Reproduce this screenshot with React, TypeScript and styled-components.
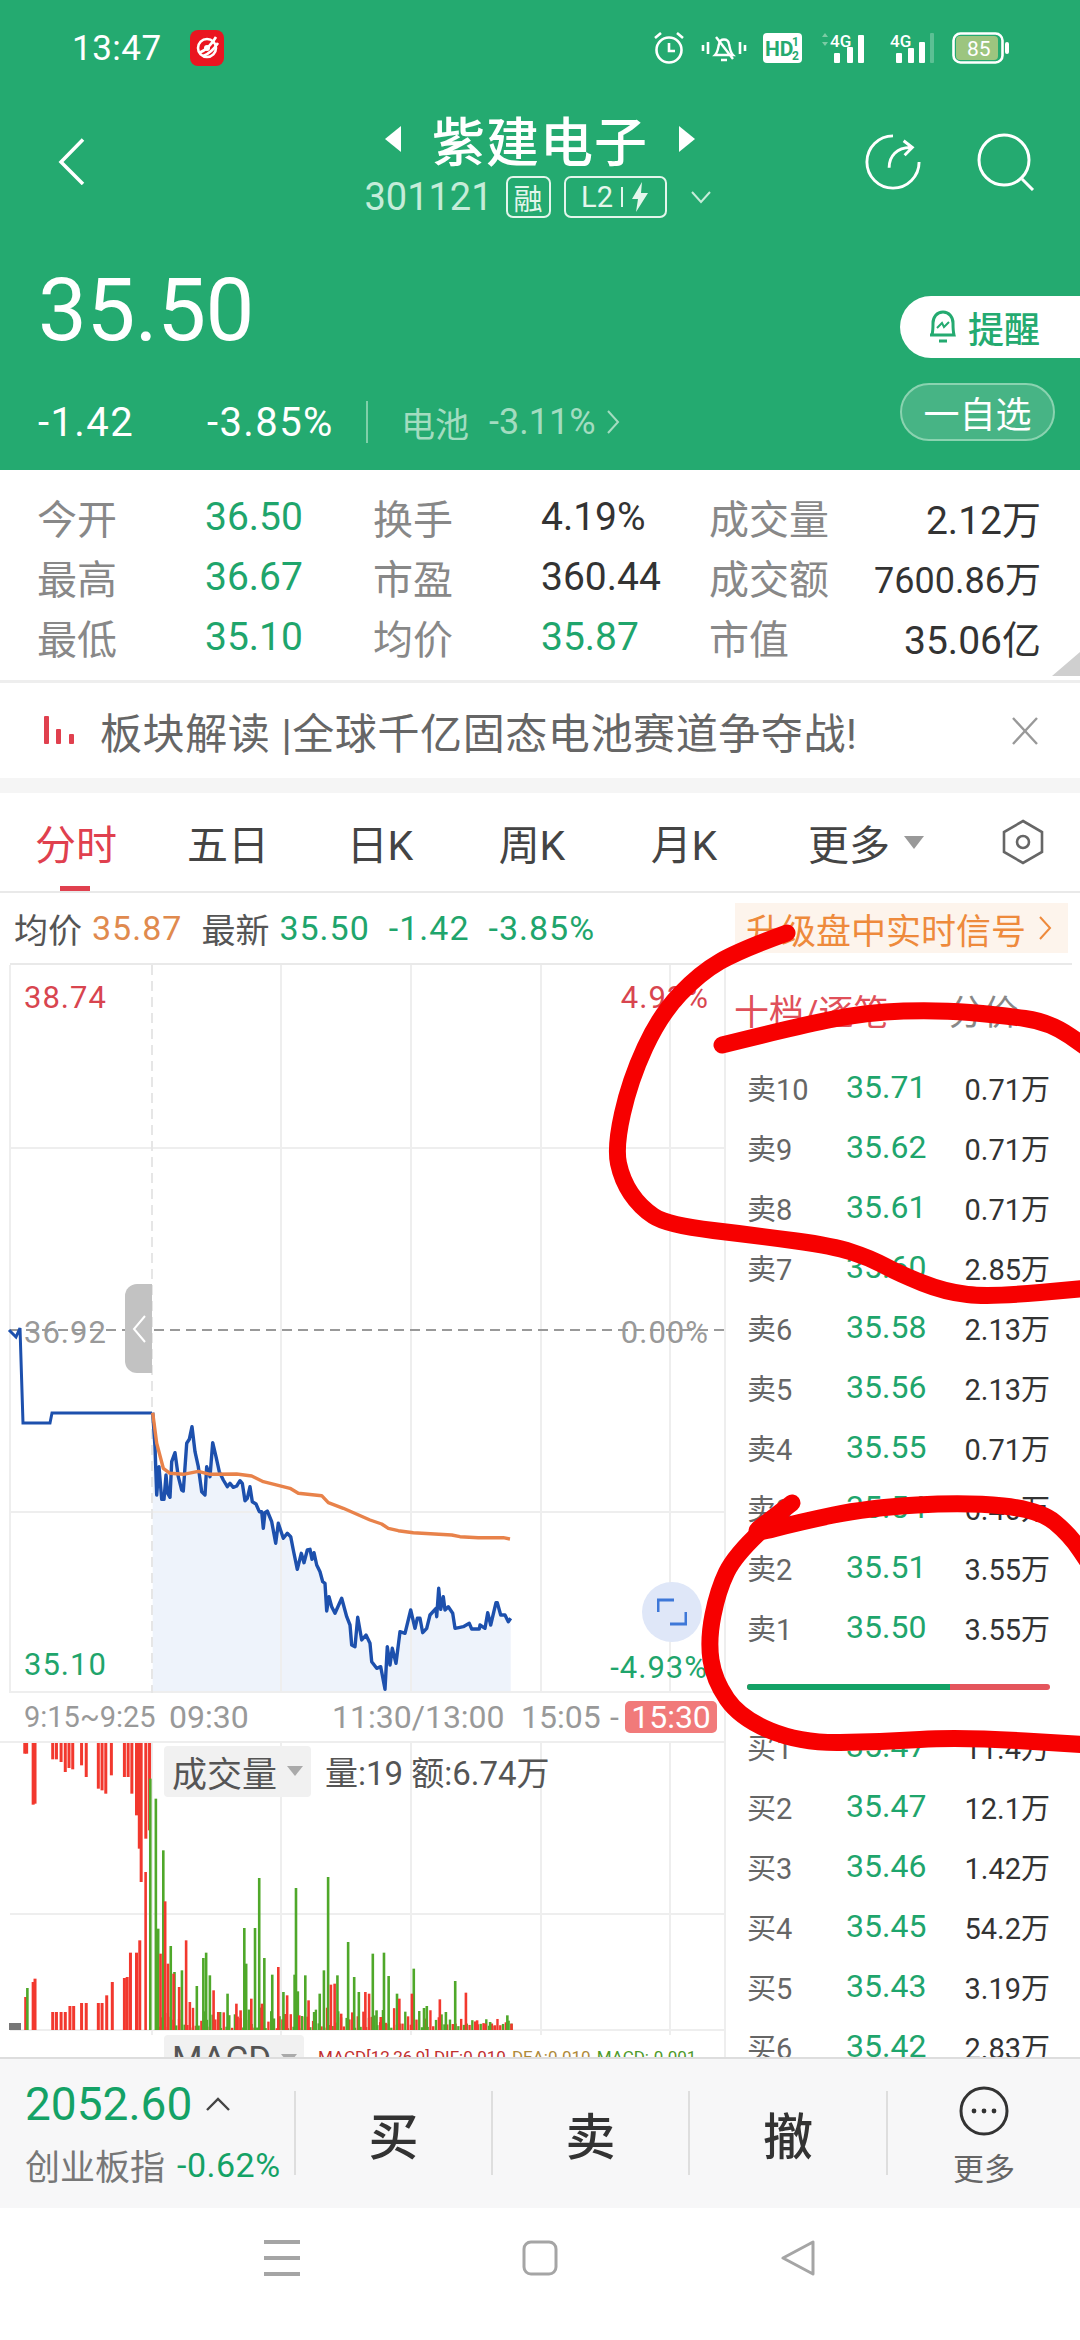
import React from 'react'
import styled, { createGlobalStyle } from 'styled-components'

const GREEN = '#24aa70'
const PRICE_GREEN = '#1fa56c'
const FONT = 'Roboto, "Noto Sans CJK SC", sans-serif'

const GlobalStyle = createGlobalStyle`
  html, body {
    margin: 0;
    padding: 0;
    background: #fff;
    font-family: ${FONT};
  }
  * { box-sizing: border-box; }
`

const Page = styled.div`
  position: relative;
  width: 1080px;
  height: 2340px;
  overflow: hidden;
  display: flex;
  flex-direction: column;
  background: #fff;
`

/* header */
const Header = styled.header`
  height: 470px;
  flex: none;
  background: ${GREEN};
  color: #fff;
`

const StatusBar = styled.div`
  height: 96px;
  display: flex;
  align-items: center;
  padding: 0 70px 0 72px;
`

const StatusTime = styled.span`
  font-size: 35px;
  width: 118px;
  letter-spacing: 0.5px;
`

const StatusIcons = styled.div`
  margin-left: auto;
  display: flex;
  align-items: center;
  gap: 16px;
`

const NavRow = styled.div`
  display: grid;
  grid-template-columns: 1fr auto 1fr;
  height: 126px;
  padding-top: 10px;
`

const BackSlot = styled.div`
  padding: 32px 0 0 58px;
`

const TitleBlock = styled.div`
  display: flex;
  flex-direction: column;
  align-items: center;
`

const TitleLine = styled.div`
  display: flex;
  align-items: center;
  gap: 30px;
  height: 66px;
  font-size: 53px;
  font-weight: 500;
  letter-spacing: 1px;
`

const SubLine = styled.div`
  display: flex;
  align-items: center;
  height: 50px;
  gap: 13px;
  padding-right: 4px;
`

const StockCode = styled.span`
  font-size: 38px;
  color: #c5ecd9;
`

const OutlineBadge = styled.span<{ $w: number }>`
  width: ${(p) => p.$w}px;
  height: 42px;
  border: 2px solid #e4f6ec;
  border-radius: 7px;
  display: inline-flex;
  align-items: center;
  justify-content: center;
  gap: 8px;
  font-size: 29px;
  color: #e4f6ec;
`

const BadgeDivider = styled.i`
  width: 2px;
  height: 20px;
  background: #e4f6ec;
`

const SubChevron = styled.svg`
  margin-left: 10px;
`

const NavActions = styled.div`
  display: flex;
  justify-content: flex-end;
  gap: 55px;
  padding: 27px 45px 0 0;
`

const QuoteRow = styled.div`
  display: flex;
  justify-content: space-between;
`

const QuoteLeft = styled.div`
  padding: 50px 0 0 38px;
`

const BigPrice = styled.div`
  font-size: 87px;
  line-height: 76px;
  height: 76px;
  letter-spacing: -0.5px;
`

const ChangeRow = styled.div`
  display: flex;
  align-items: center;
  height: 44px;
  margin-top: 52px;
  font-size: 40px;
  letter-spacing: 1.4px;
`

const ChangeValue = styled.span`
  width: 169px;
`

const ChangePct = styled.span`
  width: 159px;
`

const ChangeDivider = styled.i`
  width: 2px;
  height: 42px;
  background: #7fd0a9;
  margin-right: 33px;
`

const SectorText = styled.span`
  color: #a3dcc0;
  font-size: 34px;
  letter-spacing: 0;
  display: flex;
  align-items: center;
  gap: 20px;
`

const SectorPct = styled.span`
  display: flex;
  align-items: center;
  gap: 10px;
  font-size: 36px;
`

const QuoteRight = styled.div`
  width: 180px;
  padding-top: 74px;
  display: flex;
  flex-direction: column;
  gap: 25px;
`

const RemindButton = styled.div`
  height: 62px;
  background: #fff;
  border-radius: 31px 0 0 31px;
  color: ${GREEN};
  font-size: 36px;
  font-weight: 500;
  display: flex;
  align-items: center;
  gap: 10px;
  padding-left: 28px;
`

const WatchButton = styled.div`
  width: 155px;
  height: 58px;
  border: 2px solid #8ad3b0;
  border-radius: 29px;
  background: #47b485;
  font-size: 36px;
  display: flex;
  align-items: center;
  justify-content: center;
`

/* stat grid */
const StatsPanel = styled.section`
  position: relative;
  flex: none;
  height: 213px;
  padding: 17px 39px 0 37px;
  border-bottom: 3px solid #eeeeee;
  display: grid;
  grid-template-columns: 168px 168px 168px 168px 120px 1fr;
  grid-auto-rows: 60px;
  align-items: center;
`

const StatLabel = styled.span`
  font-size: 40px;
  color: #888;
`

const StatValue = styled.span<{ $green?: boolean; $right?: boolean; $small?: boolean }>`
  font-size: ${(p) => (p.$small ? 36 : 39)}px;
  color: ${(p) => (p.$green ? PRICE_GREEN : '#333')};
  text-align: ${(p) => (p.$right ? 'right' : 'left')};
  white-space: nowrap;
`

const CornerMark = styled.i`
  position: absolute;
  right: 0;
  bottom: 4px;
  width: 28px;
  height: 24px;
  background: #cfcfcf;
  clip-path: polygon(100% 0, 100% 100%, 0 100%);
`

/* banner */
const Banner = styled.section`
  flex: none;
  height: 95px;
  display: flex;
  align-items: center;
  padding: 0 42px 0 44px;
  gap: 24px;
  font-size: 42px;
  letter-spacing: 0.6px;
  color: #666;
`

const BannerText = styled.span`
  flex: 1;
  white-space: nowrap;
`

const GrayBand = styled.div`
  flex: none;
  height: 15px;
  background: #f5f5f5;
`

/* tabs */
const TabBar = styled.nav`
  flex: none;
  height: 100px;
  display: flex;
  align-items: center;
  border-bottom: 2px solid #e9e9e9;
  padding-right: 36px;
`

const Tab = styled.div<{ $active?: boolean; $wide?: boolean }>`
  position: relative;
  width: ${(p) => (p.$wide ? 212 : 152)}px;
  height: 100%;
  display: flex;
  align-items: center;
  justify-content: center;
  gap: 14px;
  font-size: 41px;
  color: ${(p) => (p.$active ? '#e0404e' : '#444')};
  ${(p) =>
    p.$active &&
    `&::after {
      content: '';
      position: absolute;
      left: 60px;
      bottom: 0;
      width: 30px;
      height: 5px;
      background: #e0404e;
    }`}
`

const TabCaret = styled.i`
  width: 0;
  height: 0;
  border-left: 10px solid transparent;
  border-right: 10px solid transparent;
  border-top: 13px solid #999;
`

const TabIconSlot = styled.div`
  margin-left: auto;
  display: flex;
`

/* info line */
const InfoRow = styled.div`
  flex: none;
  height: 72px;
  margin: 0 8px 0 10px;
  border-bottom: 2px solid #e9e9e9;
  display: flex;
  align-items: center;
  font-size: 34px;
  padding-left: 4px;
  white-space: nowrap;
`

const InfoLabel = styled.span`
  color: #555;
  margin-right: 10px;
`

const InfoNumber = styled.span<{ $color: string }>`
  color: ${(p) => p.$color};
  margin-right: 19px;
  letter-spacing: 1px;
`

const SignalChip = styled.div`
  margin-left: auto;
  height: 50px;
  width: 333px;
  margin-right: 4px;
  background: #fdf4ec;
  color: #ee8a3c;
  font-size: 35px;
  display: flex;
  align-items: center;
  gap: 12px;
  padding-left: 11px;
`

/* body */
const Body = styled.div`
  flex: none;
  height: 1092px;
  display: flex;
  overflow: hidden;
`

const ChartColumn = styled.div`
  width: 726px;
  flex: none;
  border-right: 2px solid #eeeeee;
`

const MainChart = styled.div`
  position: relative;
  height: 728px;
`

const ChartLabel = styled.span<{ $color: string; $x: number; $y: number; $alignRight?: boolean }>`
  position: absolute;
  top: ${(p) => p.$y}px;
  ${(p) => (p.$alignRight ? `right: ${726 - p.$x}px;` : `left: ${p.$x}px;`)}
  transform: translateY(-50%);
  font-size: 31px;
  letter-spacing: 1px;
  color: ${(p) => p.$color};
`

const SideHandle = styled.div`
  position: absolute;
  left: 125px;
  top: 319px;
  width: 27px;
  height: 89px;
  background: #c2c2c2;
  border-radius: 12px 0 0 12px;
  display: flex;
  align-items: center;
  justify-content: center;
`

const ExpandButton = styled.div`
  position: absolute;
  left: 642px;
  top: 617px;
  width: 60px;
  height: 60px;
  border-radius: 50%;
  background: #dfe7f8;
  display: flex;
  align-items: center;
  justify-content: center;
`

const TimeAxis = styled.div`
  height: 48px;
  display: grid;
  grid-template-columns: 145px 163px 189px 89px 15px 92px;
  align-items: center;
  font-size: 32px;
  color: #999;
  white-space: nowrap;
  padding-left: 24px;
`

const PreMarketTick = styled.span`
  font-size: 29px;
`

const TimeBadge = styled.span`
  height: 32px;
  border-radius: 5px;
  background: #f17a7a;
  color: #fff;
  display: flex;
  align-items: center;
  justify-content: center;
`

const VolumeChart = styled.div`
  position: relative;
  height: 294px;
  border-top: 2px solid #eeeeee;
`

const ChartChip = styled.div`
  background: #f1f1f1;
  border-radius: 4px;
  color: #555;
  font-size: 35px;
  display: flex;
  align-items: center;
  gap: 10px;
  padding: 0 8px;
`

const VolumeLegend = styled.div`
  position: absolute;
  left: 164px;
  top: 4px;
  display: flex;
  align-items: center;
  gap: 14px;
  font-size: 33px;
  color: #555;
  height: 48px;
`

const ChipCaret = styled.i`
  width: 0;
  height: 0;
  border-left: 8px solid transparent;
  border-right: 8px solid transparent;
  border-top: 10px solid #aaa;
`

const MacdRow = styled.div`
  display: flex;
  align-items: flex-start;
  height: 24px;
  padding-left: 164px;
  white-space: nowrap;
  font-size: 17px;
  overflow: hidden;
`

const MacdChip = styled(ChartChip)`
  height: 48px;
  width: 140px;
  margin-right: 14px;
`

const MacdText = styled.span<{ $color: string }>`
  color: ${(p) => p.$color};
  margin-right: 6px;
  line-height: 44px;
`

/* order book */
const DepthColumn = styled.div`
  flex: 1;
`

const DepthTabs = styled.div`
  height: 92px;
  padding: 0 0 22px 8px;
  display: flex;
  align-items: flex-end;
  font-size: 35px;
  color: #888;
  gap: 60px;
`

const DepthTabActive = styled.span`
  color: #e0505a;
`

const DepthRow = styled.div`
  height: 60px;
  display: grid;
  grid-template-columns: 99px 1fr auto;
  align-items: center;
  padding: 0 30px 0 21px;
`

const DepthLabel = styled.span`
  font-size: 29px;
  color: #666;
`

const DepthPrice = styled.span`
  font-size: 32px;
  color: ${PRICE_GREEN};
`

const DepthVolume = styled.span`
  font-size: 29px;
  color: #333;
`

const SpreadSlot = styled.div`
  height: 59px;
  display: flex;
  align-items: center;
  padding: 0 30px 0 21px;
`

const SpreadBar = styled.div`
  flex: 1;
  height: 6px;
  border-radius: 3px;
  overflow: hidden;
  display: flex;
  background: #e4555c;
`

const SpreadBuy = styled.div<{ $pct: number }>`
  width: ${(p) => p.$pct}%;
  background: #14a266;
`

/* bottom bar */
const TradeBar = styled.footer`
  flex: none;
  height: 151px;
  background: #f7f7f8;
  border-top: 2px solid #dddddd;
  display: grid;
  grid-template-columns: 294px 197px 197px 198px 1fr;
  padding-top: 32px;
`

const IndexCell = styled.div`
  padding-left: 25px;
`

const IndexValue = styled.div`
  display: flex;
  align-items: center;
  gap: 14px;
  height: 46px;
  margin-top: -10px;
  font-size: 46px;
  color: #14a266;
`

const IndexMeta = styled.div`
  display: flex;
  align-items: center;
  margin-top: 12px;
  gap: 12px;
  font-size: 35px;
  color: #777;
  white-space: nowrap;
`

const IndexPct = styled.span`
  color: #14a266;
  font-size: 34px;
  letter-spacing: 0.5px;
`

const TradeCell = styled.div`
  height: 84px;
  border-left: 2px solid #dedede;
  display: flex;
  align-items: center;
  justify-content: center;
  font-size: 50px;
  font-weight: 500;
  color: #333;
`

const MoreCell = styled.div`
  height: 84px;
  border-left: 2px solid #dedede;
  display: flex;
  flex-direction: column;
  align-items: center;
  gap: 8px;
  font-size: 31px;
  color: #666;
  svg {
    flex: none;
    margin-top: -5px;
  }
`

const SystemNav = styled.div`
  flex: 1;
  display: flex;
  align-items: center;
  justify-content: center;
  gap: 222px;
  padding-bottom: 32px;
`

const Annotation = styled.svg`
  position: absolute;
  left: 0;
  top: 0;
  pointer-events: none;
`

const stats: [string, string, boolean, string, string, boolean, string, string][] = [
  ['今开', '36.50', true, '换手', '4.19%', false, '成交量', '2.12万'],
  ['最高', '36.67', true, '市盈', '360.44', false, '成交额', '7600.86万'],
  ['最低', '35.10', true, '均价', '35.87', true, '市值', '35.06亿'],
]

const asks: [string, string, string][] = [
  ['卖10', '35.71', '0.71万'],
  ['卖9', '35.62', '0.71万'],
  ['卖8', '35.61', '0.71万'],
  ['卖7', '35.60', '2.85万'],
  ['卖6', '35.58', '2.13万'],
  ['卖5', '35.56', '2.13万'],
  ['卖4', '35.55', '0.71万'],
  ['卖3', '35.54', '6.40万'],
  ['卖2', '35.51', '3.55万'],
  ['卖1', '35.50', '3.55万'],
]

const bids: [string, string, string][] = [
  ['买1', '35.47', '11.4万'],
  ['买2', '35.47', '12.1万'],
  ['买3', '35.46', '1.42万'],
  ['买4', '35.45', '54.2万'],
  ['买5', '35.43', '3.19万'],
  ['买6', '35.42', '2.83万'],
]

// price line, read off the screenshot at 3x, origin (130,1380)
const priceRaw = [
  68,98,75,200,80,345,87,260,95,358,102,358,108,285,113,340,120,352,125,245,135,218,145,290,155,330,160,333,170,190,178,178,186,140,195,215,205,260,215,335,225,345,230,260,240,290,248,188,258,230,268,275,280,300,292,320,300,310,310,322,320,318,330,302,337,310,345,362,352,355,360,320,367,365,378,372,388,395,395,395,400,445,405,398,412,393,425,425,437,490,445,430,460,475,472,460,482,470,490,510,502,568,514,520,522,548,532,510,540,508,546,538,552,518,560,555,570,575,578,605,585,610,590,693,597,650,605,680,615,700,635,655,650,710,660,735,665,795,675,800,683,712,695,780,708,765,720,790,725,845,740,865,752,860,765,928,772,800,780,855,787,805,798,850,810,755,825,760,842,690,855,745,862,715,870,715,878,758,890,745,900,705,918,685,920,710,926,625,932,688,940,650,945,690,955,680,968,700,975,745,990,742,1000,740,1018,730,1025,747,1048,747,1050,735,1065,745,1073,698,1082,735,1098,668,1102,668,1112,705,1125,705,1135,725,1142,715,
]

const avgRaw = [
  68,98,80,190,100,265,120,280,160,283,205,274,240,283,320,282,365,288,400,305,480,325,505,340,575,347,595,368,640,385,720,420,755,432,775,445,805,452,850,458,965,465,990,470,1045,473,1120,473,1140,477,
]

const toChartPoints = (raw: number[]) => {
  const out: string[] = []
  for (let i = 0; i < raw.length; i += 2) {
    out.push(`${(130 + raw[i] / 3).toFixed(1)},${(415 + raw[i + 1] / 3).toFixed(1)}`)
  }
  return out
}

const pricePoints = toChartPoints(priceRaw)
const avgPoints = toChartPoints(avgRaw)
const preMarket = '9,365 16,372 20,363 23,458 50,458 52,448 152,448'
const areaPoints = `152.7,728 ${pricePoints.join(' ')} 510.7,728`

// volume bars, x and top y in zoomed units (x 2.148, y 3)
const hanging = [
  [50, 215], [54, 215], [68, 368], [72, 365], [110, 232], [118, 232], [128, 240], [137, 270], [145, 258], [153, 262],
  [172, 250], [182, 285], [208, 320], [216, 325], [224, 335], [236, 280], [264, 285], [272, 285], [280, 335], [290, 400],
  [296, 500], [300, 600], [310, 470], [318, 445],
]
const preBars = [
  [52, 945], [68, 900], [72, 890], [110, 990], [118, 990], [128, 990], [137, 990], [147, 972], [155, 972], [172, 963],
  [182, 963], [208, 963], [216, 963], [226, 940], [238, 900], [264, 888], [270, 885], [277, 812], [290, 812], [297, 775],
]
const greenBars = [
  [56, 918], [320, 290], [332, 350], [337, 740], [348, 505], [364, 792], [372, 870], [388, 865], [420, 912], [434, 828],
  [440, 812], [448, 880], [470, 990], [486, 935], [522, 738], [526, 845], [545, 738], [554, 588], [565, 828], [582, 878],
  [606, 930], [630, 878], [633, 618], [637, 928], [653, 880], [672, 990], [684, 935], [693, 865], [702, 585], [722, 880],
  [745, 780], [758, 885], [768, 930], [798, 815], [806, 985], [822, 812], [832, 882], [850, 935], [886, 860], [908, 978],
  [914, 972], [955, 990], [975, 897], [1050, 1020], [1087, 1000],
]
const redBars = [
  [310, 570], [342, 815], [352, 658], [358, 845], [370, 875], [382, 915], [397, 775], [405, 960], [456, 925], [466, 990],
  [505, 965], [514, 985], [537, 950], [560, 965], [595, 855], [614, 940], [640, 1000], [660, 955], [708, 908], [716, 905],
  [730, 995], [782, 930], [790, 935], [815, 1005], [855, 950], [882, 935], [942, 952], [998, 932], [1022, 1015], [1040, 1025],
  [1060, 1030], [1096, 1025],
]

const volX = (x: number) => x / 2.148
const volY = (y: number) => y / 3 - 61
const VOL_BASE = 287

const filler: { x: number; top: number; red: boolean }[] = []
for (let x = 340; x < 1100; x += 6) {
  const wave = Math.abs(Math.sin(x * 0.37) + Math.sin(x * 0.11)) * 24
  const fade = x > 950 ? 12 : 6
  filler.push({ x, top: 1045 - fade - wave * (x > 950 ? 0.5 : 1.3), red: Math.sin(x * 1.7) > 0 })
}

const smooth = (pts: number[][]) => {
  let d = `M${pts[0][0]} ${pts[0][1]}`
  for (let i = 1; i < pts.length - 1; i++) {
    const mx = (pts[i][0] + pts[i + 1][0]) / 2
    const my = (pts[i][1] + pts[i + 1][1]) / 2
    d += ` Q${pts[i][0]} ${pts[i][1]} ${mx} ${my}`
  }
  const last = pts[pts.length - 1]
  return `${d} L${last[0]} ${last[1]}`
}

const strokes = [
  smooth([[787, 933], [740, 950], [700, 973], [660, 1015], [630, 1080], [615, 1147], [622, 1180], [640, 1207], [667, 1225], [760, 1236], [833, 1246], [870, 1258], [900, 1274], [945, 1292], [990, 1297], [1090, 1288]]),
  smooth([[722, 1045], [790, 1028], [867, 1012], [940, 1010], [1000, 1015], [1050, 1022], [1090, 1050]]),
  smooth([[792, 1503], [770, 1520], [750, 1535], [800, 1522], [867, 1508], [967, 1502], [1040, 1510], [1070, 1535], [1090, 1565]]),
  smooth([[762, 1530], [735, 1555], [718, 1590], [708, 1640], [714, 1680], [740, 1718], [800, 1743], [880, 1742], [960, 1737], [1090, 1745]]),
]

const DepthLine = ({ row }: { row: [string, string, string] }) => (
  <DepthRow>
    <DepthLabel>{row[0]}</DepthLabel>
    <DepthPrice>{row[1]}</DepthPrice>
    <DepthVolume>{row[2]}</DepthVolume>
  </DepthRow>
)

const StatusGlyphs = () => (
  <StatusIcons>
    <svg width="32" height="34" viewBox="0 0 32 34" fill="none" stroke="#fff" strokeWidth="2.6">
      <circle cx="16" cy="19" r="12.5" />
      <path d="M16 12v8h6M2 7l6-5M30 7l-6-5" />
    </svg>
    <svg width="46" height="32" viewBox="0 0 46 32" fill="none" stroke="#fff" strokeWidth="2.4">
      <path d="M14 23c3-3 3-7 4-11 1-6 9-6 10 0 1 4 1 8 4 11zM20 28h6M15 5l17 22" />
      <path d="M2 13v6M7 10v12M39 10v12M44 13v6" strokeWidth="2.6" />
    </svg>
    <svg width="39" height="30" viewBox="0 0 39 30">
      <rect width="39" height="30" rx="4" fill="#fff" />
      <text x="2" y="23" fontSize="21" fontWeight="700" fill={GREEN} fontFamily="Roboto">HD</text>
      <text x="29" y="13" fontSize="12" fontWeight="700" fill={GREEN} fontFamily="Roboto">1</text>
      <text x="29" y="27" fontSize="12" fontWeight="700" fill={GREEN} fontFamily="Roboto">2</text>
    </svg>
    <svg width="56" height="32" viewBox="0 0 56 32" fill="#fff">
      <path d="M4 5l3-4 3 4zM4 10l3 4 3-4z" fill="#7ccba4" />
      <text x="12" y="15" fontSize="17" fontWeight="500" fontFamily="Roboto">4G</text>
      <rect x="16" y="21" width="6" height="10" rx="1" />
      <rect x="29" y="15" width="6" height="16" rx="1" />
      <rect x="40" y="3" width="6" height="28" rx="1" />
    </svg>
    <svg width="46" height="32" viewBox="0 0 46 32" fill="#fff">
      <text x="0" y="15" fontSize="17" fontWeight="500" fontFamily="Roboto">4G</text>
      <rect x="6" y="21" width="6" height="10" rx="1" />
      <rect x="18" y="16" width="6" height="15" rx="1" />
      <rect x="29" y="10" width="6" height="21" rx="1" />
      <rect x="40" y="1" width="4" height="30" rx="1" fill="#5cc094" />
    </svg>
    <svg width="58" height="32" viewBox="0 0 58 32">
      <rect x="1.5" y="1.5" width="49" height="29" rx="7" fill="none" stroke="#fff" strokeWidth="2.6" />
      <rect x="4" y="4" width="42" height="24" rx="4" fill="#9cc57f" />
      <rect x="53" y="10" width="4" height="12" rx="2" fill="#fff" />
      <text x="15" y="24" fontSize="21" fill="#fff" fontFamily="Roboto">85</text>
    </svg>
  </StatusIcons>
)

const App: React.FC = () => {
  return (
    <Page>
      <GlobalStyle />
      <Header>
        <StatusBar>
          <StatusTime>13:47</StatusTime>
          <svg width="34" height="36" viewBox="0 0 34 36" fill="none">
            <rect width="34" height="36" rx="8" fill="#ea1520" />
            <circle cx="17" cy="18" r="9" stroke="#fff" strokeWidth="2.6" />
            <path d="M9 23 C16 20 22 14 26 7 M13 26 C19 24 24 19 28 13" stroke="#fff" strokeWidth="2.6" />
            <circle cx="17" cy="18" r="3" fill="#fff" />
          </svg>
          <StatusGlyphs />
        </StatusBar>
        <NavRow>
          <BackSlot>
            <svg width="27" height="47" viewBox="0 0 27 47" fill="none" stroke="#fff" strokeWidth="3.5">
              <path d="M25 1.5 3 24l22 22" />
            </svg>
          </BackSlot>
          <TitleBlock>
            <TitleLine>
              <svg width="18" height="26" viewBox="0 0 18 26" fill="#fff"><path d="M17 0v26L1 13z" /></svg>
              <span>紫建电子</span>
              <svg width="18" height="26" viewBox="0 0 18 26" fill="#fff"><path d="M1 0v26l16-13z" /></svg>
            </TitleLine>
            <SubLine>
              <StockCode>301121</StockCode>
              <OutlineBadge $w={45}>融</OutlineBadge>
              <OutlineBadge $w={103}>
                L2
                <BadgeDivider />
                <svg width="18" height="30" viewBox="0 0 18 30" fill="#e4f6ec"><path d="M11 0 1 17h6L5 30l12-19h-7z" /></svg>
              </OutlineBadge>
              <SubChevron width="22" height="14" viewBox="0 0 22 14" fill="none" stroke="#c5ecd9" strokeWidth="2"><path d="m2 2 9 10 9-10" /></SubChevron>
            </SubLine>
          </TitleBlock>
          <NavActions>
            <svg width="58" height="58" viewBox="0 0 60 60" fill="none" stroke="#fff" strokeWidth="3">
              <path d="M30 3A27 27 0 1 0 57 30" />
              <path d="M26 36C26 24 34 15 48 15M41 8l9 7-8 8" />
            </svg>
            <svg width="58" height="58" viewBox="0 0 58 58" fill="none" stroke="#fff" strokeWidth="3">
              <circle cx="27" cy="27" r="25" />
              <path d="m45 46 11 11" />
            </svg>
          </NavActions>
        </NavRow>
        <QuoteRow>
          <QuoteLeft>
            <BigPrice>35.50</BigPrice>
            <ChangeRow>
              <ChangeValue>-1.42</ChangeValue>
              <ChangePct>-3.85%</ChangePct>
              <ChangeDivider />
              <SectorText>
                电池
                <SectorPct>
                  -3.11%
                  <svg width="14" height="26" viewBox="0 0 14 26" fill="none" stroke="#a3dcc0" strokeWidth="2"><path d="m2 2 10 11L2 24" /></svg>
                </SectorPct>
              </SectorText>
            </ChangeRow>
          </QuoteLeft>
          <QuoteRight>
            <RemindButton>
              <svg width="30" height="36" viewBox="0 0 30 36" fill="none" stroke={GREEN} strokeWidth="3">
                <path d="M4 26c1-4 1-8 1-12C5 8 9 3 15 3s10 5 10 11c0 4 0 8 1 12H2zM11 32h8" />
                <path d="m9 19 5-5 2 4 5-5" strokeWidth="2" />
              </svg>
              提醒
            </RemindButton>
            <WatchButton>一自选</WatchButton>
          </QuoteRight>
        </QuoteRow>
      </Header>

      <StatsPanel>
        {stats.map((r) => (
          <React.Fragment key={r[0]}>
            <StatLabel>{r[0]}</StatLabel>
            <StatValue $green={r[2]}>{r[1]}</StatValue>
            <StatLabel>{r[3]}</StatLabel>
            <StatValue $green={r[5]}>{r[4]}</StatValue>
            <StatLabel>{r[6]}</StatLabel>
            <StatValue $right $small={r[7].length > 7}>{r[7]}</StatValue>
          </React.Fragment>
        ))}
        <CornerMark />
      </StatsPanel>

      <Banner>
        <svg width="32" height="30" viewBox="0 0 32 30" fill="#e0404e">
          <rect x="0" y="0" width="5" height="28" rx="1" />
          <rect x="12" y="13" width="5" height="15" rx="1" />
          <rect x="25" y="18" width="5" height="10" rx="1" />
        </svg>
        <BannerText>板块解读 |全球千亿固态电池赛道争夺战!</BannerText>
        <svg width="26" height="28" viewBox="0 0 26 28" fill="none" stroke="#999" strokeWidth="2.4"><path d="m1 1 24 26M25 1 1 27" /></svg>
      </Banner>
      <GrayBand />

      <TabBar>
        <Tab $active>分时</Tab>
        <Tab>五日</Tab>
        <Tab>日K</Tab>
        <Tab>周K</Tab>
        <Tab>月K</Tab>
        <Tab $wide>更多<TabCaret /></Tab>
        <TabIconSlot>
          <svg width="42" height="46" viewBox="0 0 42 46" fill="none" stroke="#666" strokeWidth="2.6">
            <path d="M21 2 40 13v20L21 44 2 33V13z" />
            <circle cx="21" cy="23" r="6" />
          </svg>
        </TabIconSlot>
      </TabBar>

      <InfoRow>
        <InfoLabel>均价</InfoLabel>
        <InfoNumber $color="#e08a4e">35.87</InfoNumber>
        <InfoLabel>最新</InfoLabel>
        <InfoNumber $color={PRICE_GREEN}>35.50</InfoNumber>
        <InfoNumber $color={PRICE_GREEN}>-1.42</InfoNumber>
        <InfoNumber $color={PRICE_GREEN}>-3.85%</InfoNumber>
        <SignalChip>
          升级盘中实时信号
          <svg width="14" height="26" viewBox="0 0 14 26" fill="none" stroke="#ee8a3c" strokeWidth="2"><path d="m2 2 10 11L2 24" /></svg>
        </SignalChip>
      </InfoRow>

      <Body>
        <ChartColumn>
          <MainChart>
            <svg width="726" height="728" viewBox="0 0 726 728">
              <polygon points={areaPoints} fill="#eef3fb" />
              <g stroke="#eeeeee" strokeWidth="2">
                <path d="M10 0V728M281 0V728M411 0V728M541 0V728M670 0V728" />
                <path d="M10 183H724M10 547H724M10 727H724" />
              </g>
              <path d="M152 0V728" stroke="#e6e6e6" strokeWidth="2" strokeDasharray="10 6" />
              <path d="M10 365H724" stroke="#999" strokeWidth="2" strokeDasharray="10 6" />
              <polyline points={preMarket} fill="none" stroke="#1d50ad" strokeWidth="3" />
              <polyline points={pricePoints.join(' ')} fill="none" stroke="#1d50ad" strokeWidth="3.4" strokeLinejoin="round" />
              <polyline points={avgPoints.join(' ')} fill="none" stroke="#e8824a" strokeWidth="3.4" strokeLinejoin="round" />
            </svg>
            <ChartLabel $color="#d8454f" $x={24} $y={32}>38.74</ChartLabel>
            <ChartLabel $color="#d8454f" $x={711} $y={32} $alignRight>4.93%</ChartLabel>
            <ChartLabel $color="#999" $x={24} $y={367}>36.92</ChartLabel>
            <ChartLabel $color="#999" $x={711} $y={367} $alignRight>0.00%</ChartLabel>
            <ChartLabel $color={PRICE_GREEN} $x={24} $y={699}>35.10</ChartLabel>
            <ChartLabel $color={PRICE_GREEN} $x={710} $y={702} $alignRight>-4.93%</ChartLabel>
            <SideHandle>
              <svg width="14" height="28" viewBox="0 0 14 28" fill="none" stroke="#fff" strokeWidth="2"><path d="M13 1 2 14l11 13" /></svg>
            </SideHandle>
            <ExpandButton>
              <svg width="30" height="28" viewBox="0 0 30 28" fill="none" stroke="#3e78d8" strokeWidth="3">
                <path d="M1 14V2h16M29 14v12H13" />
              </svg>
            </ExpandButton>
          </MainChart>
          <TimeAxis>
            <PreMarketTick>9:15~9:25</PreMarketTick>
            <span>09:30</span>
            <span>11:30/13:00</span>
            <span>15:05</span>
            <span>-</span>
            <TimeBadge>15:30</TimeBadge>
          </TimeAxis>
          <VolumeChart>
            <svg width="724" height="292" viewBox="0 0 724 292">
              <g stroke="#eeeeee" strokeWidth="2">
                <path d="M152 0V292M281 0V292M411 0V292M541 0V292M670 0V292" />
                <path d="M10 171H724M10 287H724" />
              </g>
              {filler.map((b) => (
                <rect key={b.x} x={volX(b.x)} y={volY(b.top)} width="2.4" height={VOL_BASE - volY(b.top)} fill={b.red ? '#f2382e' : '#4fa82a'} />
              ))}
              {hanging.map(([x, y]) => (
                <rect key={`h${x}`} x={volX(x)} y="0" width="3" height={volY(y)} fill="#f2382e" />
              ))}
              {preBars.map(([x, y]) => (
                <rect key={`p${x}`} x={volX(x)} y={volY(y)} width="3" height={VOL_BASE - volY(y)} fill="#f2382e" />
              ))}
              {greenBars.map(([x, y]) => (
                <rect key={`g${x}`} x={volX(x)} y={volY(y)} width="2.6" height={VOL_BASE - volY(y)} fill="#4fa82a" />
              ))}
              {redBars.map(([x, y]) => (
                <rect key={`r${x}`} x={volX(x)} y={volY(y)} width="2.6" height={VOL_BASE - volY(y)} fill="#f2382e" />
              ))}
              <rect x="9" y="280" width="12" height="7" fill="#777" />
            </svg>
            <VolumeLegend>
              <ChartChip>成交量<ChipCaret /></ChartChip>
              <span>量:19 额:6.74万</span>
            </VolumeLegend>
          </VolumeChart>
          <MacdRow>
            <MacdChip>MACD<ChipCaret /></MacdChip>
            <MacdText $color="#c23030">MACD[12,26,9] DIF:0.010</MacdText>
            <MacdText $color="#b08a3a">DEA:0.010</MacdText>
            <MacdText $color="#4f9a2a">MACD:-0.001</MacdText>
          </MacdRow>
        </ChartColumn>

        <DepthColumn>
          <DepthTabs>
            <DepthTabActive>十档/逐笔</DepthTabActive>
            <span>分价</span>
          </DepthTabs>
          {asks.map((r) => (
            <DepthLine key={r[0]} row={r} />
          ))}
          <SpreadSlot>
            <SpreadBar>
              <SpreadBuy $pct={67} />
            </SpreadBar>
          </SpreadSlot>
          {bids.map((r) => (
            <DepthLine key={r[0]} row={r} />
          ))}
        </DepthColumn>
      </Body>

      <TradeBar>
        <IndexCell>
          <IndexValue>
            2052.60
            <svg width="24" height="14" viewBox="0 0 24 14" fill="none" stroke="#444" strokeWidth="2.4"><path d="m1 13 11-11 11 11" /></svg>
          </IndexValue>
          <IndexMeta>
            创业板指
            <IndexPct>-0.62%</IndexPct>
          </IndexMeta>
        </IndexCell>
        <TradeCell>买</TradeCell>
        <TradeCell>卖</TradeCell>
        <TradeCell>撤</TradeCell>
        <MoreCell>
          <svg width="50" height="50" viewBox="0 0 50 50" fill="#333">
            <circle cx="25" cy="25" r="23" fill="none" stroke="#333" strokeWidth="3" />
            <circle cx="15" cy="25" r="2.4" />
            <circle cx="25" cy="25" r="2.4" />
            <circle cx="35" cy="25" r="2.4" />
          </svg>
          更多
        </MoreCell>
      </TradeBar>

      <SystemNav>
        <svg width="36" height="36" viewBox="0 0 36 36" fill="#a5a5a5">
          <rect y="0" width="36" height="4" />
          <rect y="16" width="36" height="4" />
          <rect y="32" width="36" height="4" />
        </svg>
        <svg width="36" height="36" viewBox="0 0 36 36" fill="none" stroke="#a5a5a5" strokeWidth="3">
          <rect x="2" y="2" width="32" height="32" rx="7" />
        </svg>
        <svg width="36" height="36" viewBox="0 0 36 36" fill="none" stroke="#a5a5a5" strokeWidth="3" strokeLinejoin="round">
          <path d="M33 2v32L3 18z" />
        </svg>
      </SystemNav>

      <Annotation width="1080" height="2340" viewBox="0 0 1080 2340" fill="none" stroke="#f70000" strokeWidth="17" strokeLinecap="round" strokeLinejoin="round">
        {strokes.map((d) => (
          <path key={d} d={d} />
        ))}
      </Annotation>
    </Page>
  )
}

export default App
